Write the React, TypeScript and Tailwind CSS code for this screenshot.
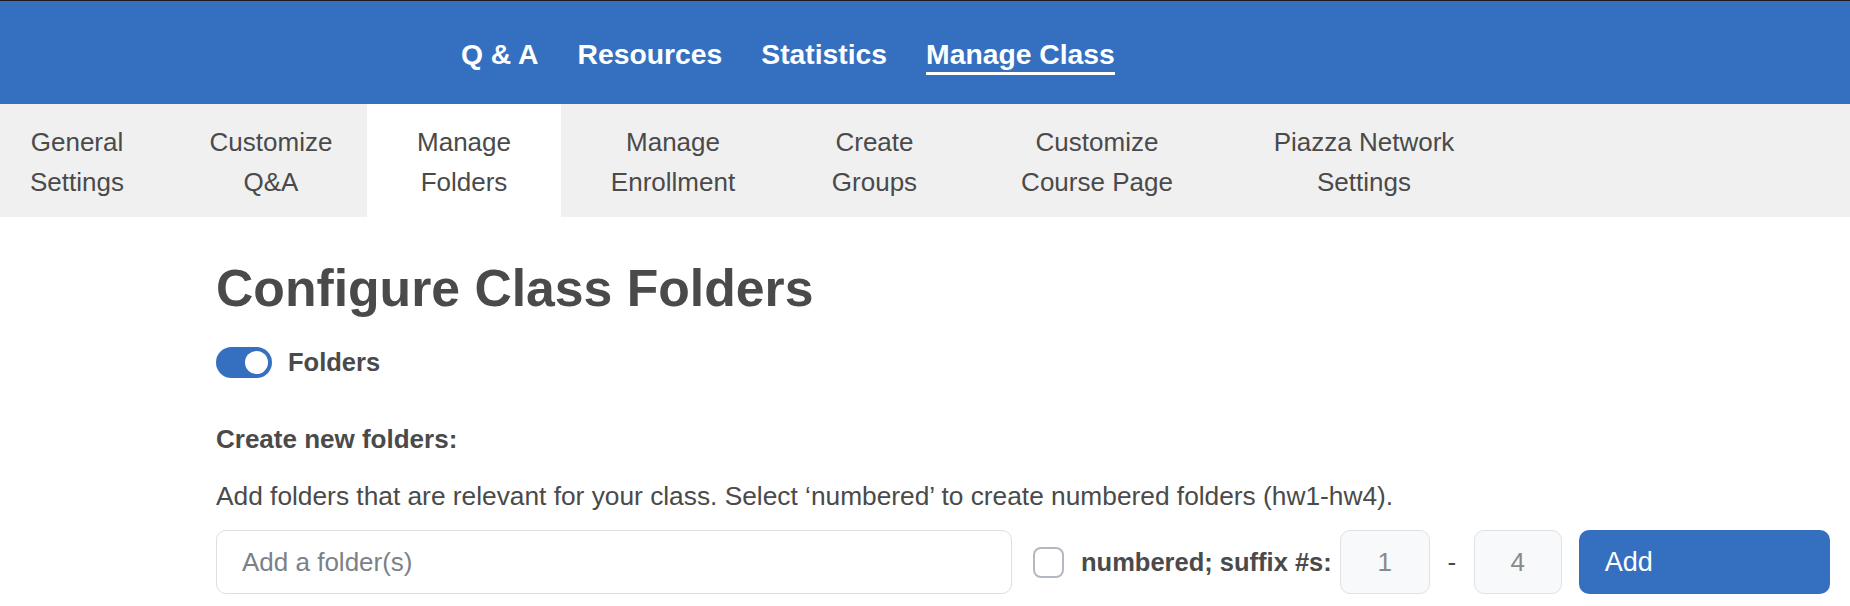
import { useState } from "react";

const topNav = [
  { label: "Q & A", active: false },
  { label: "Resources", active: false },
  { label: "Statistics", active: false },
  { label: "Manage Class", active: true },
];

const tabs = [
  { l1: "General", l2: "Settings", cls: "w-[175px] pr-[21px]", active: false },
  { l1: "Customize", l2: "Q&A", cls: "w-[192px]", active: false },
  { l1: "Manage", l2: "Folders", cls: "w-[194px]", active: true },
  { l1: "Manage", l2: "Enrollment", cls: "w-[224px]", active: false },
  { l1: "Create", l2: "Groups", cls: "w-[179px]", active: false },
  { l1: "Customize", l2: "Course Page", cls: "w-[266px]", active: false },
  { l1: "Piazza Network", l2: "Settings", cls: "w-[268px]", active: false },
];

export default function App() {
  const [enabled, setEnabled] = useState(true);
  const [numbered, setNumbered] = useState(false);

  return (
    <div className="min-h-[606px] bg-white font-['Liberation_Sans',Arial,sans-serif] text-[#4a4a4a]">
      {/* top bar */}
      <header className="h-[104px] border-t border-[#1c1c1c] bg-[#3570c0]">
        <nav className="flex h-full items-start gap-[39px] pl-[461px] pt-[37px]">
          {topNav.map((n) => (
            <a
              key={n.label}
              href="#"
              className={
                n.active
                  ? "border-b-[3px] border-white pb-[2px] text-[28.3px] font-bold leading-[32px] text-white"
                  : "text-[28.3px] font-bold leading-[32px] text-white"
              }
            >
              {n.label}
            </a>
          ))}
        </nav>
      </header>

      {/* settings tabs */}
      <div className="flex h-[113px] bg-[#f0f0f0]">
        {tabs.map((t) => (
          <a
            key={t.l1 + t.l2}
            href="#"
            className={`flex shrink-0 items-center justify-center pt-[3px] text-center text-[26px] leading-[40px] text-[#4a4a4a] ${t.cls} ${
              t.active ? "bg-white" : ""
            }`}
          >
            <span>
              {t.l1}
              <br />
              {t.l2}
            </span>
          </a>
        ))}
      </div>

      <main className="pl-[216px]">
        <h1 className="mt-[40px] text-[51.7px] font-bold leading-[62px] text-[#4a4a4a]">
          Configure Class Folders
        </h1>

        <label className="mt-[28px] flex items-center gap-[16px]">
          <button
            type="button"
            onClick={() => setEnabled(!enabled)}
            className={`flex h-[31px] w-[56px] items-center rounded-full px-[4px] ${
              enabled ? "justify-end bg-[#3570c0]" : "justify-start bg-[#ced4da]"
            }`}
          >
            <span className="h-[23px] w-[23px] rounded-full bg-white" />
          </button>
          <span className="text-[25.5px] font-bold leading-[31px]">Folders</span>
        </label>

        <h2 className="mt-[45px] text-[26px] font-bold leading-[32px]">Create new folders:</h2>

        <p className="mt-[25px] text-[26.3px] leading-[32px]">
          Add folders that are relevant for your class. Select ‘numbered’ to create numbered folders
          (hw1-hw4).
        </p>

        <div className="mt-[18px] flex h-[64px] items-center whitespace-nowrap">
          <input
            type="text"
            placeholder="Add a folder(s)"
            className="h-full w-[796px] shrink-0 rounded-[10px] border border-[#dcdfe3] bg-white px-[25px] text-[26px] text-[#4a4a4a] outline-none placeholder:text-[#7b8189]"
          />
          <button
            type="button"
            onClick={() => setNumbered(!numbered)}
            className={`ml-[21px] h-[31px] w-[31px] shrink-0 rounded-[8px] border-2 ${
              numbered ? "border-[#3570c0] bg-[#3570c0]" : "border-[#b3b9c1] bg-white"
            }`}
          />
          <span className="ml-[17px] shrink-0 text-[25.5px] font-bold leading-[31px] text-[#4a4a4a]">
            numbered; suffix #s:
          </span>
          <input
            type="text"
            defaultValue="1"
            className="ml-[8px] h-full w-[90px] shrink-0 rounded-[10px] border border-[#dee2e6] bg-[#f8f9fa] text-center text-[26px] text-[#8a8a8a] outline-none"
          />
          <span className="w-[44px] shrink-0 text-center text-[26px] text-[#4a4a4a]">-</span>
          <input
            type="text"
            defaultValue="4"
            className="h-full w-[88px] shrink-0 rounded-[10px] border border-[#dee2e6] bg-[#f8f9fa] text-center text-[26px] text-[#8a8a8a] outline-none"
          />
          <button
            type="button"
            className="ml-[17px] h-full w-[251px] shrink-0 rounded-[10px] bg-[#3570c0] pl-[26px] text-left text-[27px] text-white"
          >
            Add
          </button>
        </div>
      </main>
    </div>
  );
}
